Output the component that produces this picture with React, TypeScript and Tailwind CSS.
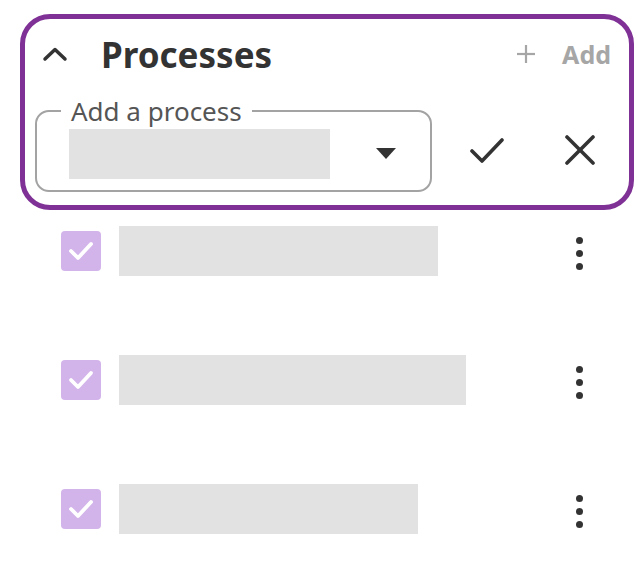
import { useState } from "react";

const font = { fontFamily: '"Noto Sans", "Liberation Sans", sans-serif' };

type Row = { id: number; width: number };

const rows: Row[] = [
  { id: 1, width: 319 },
  { id: 2, width: 347 },
  { id: 3, width: 299 },
];

function Kebab() {
  return (
    <div className="ml-auto mt-[4px] flex w-[8px] flex-col items-center gap-[6px]">
      <span className="h-[7px] w-[7px] rounded-full bg-[#333]" />
      <span className="h-[7px] w-[7px] rounded-full bg-[#333]" />
      <span className="h-[7px] w-[7px] rounded-full bg-[#333]" />
    </div>
  );
}

export default function App() {
  const [open] = useState(true);

  return (
    <main className="min-h-screen bg-white text-[#333]" style={font}>
      <div className="pl-[20px] pr-[4px] pt-[14px]">
        {/* Processes card */}
        <section className="rounded-[30px] border-[5px] border-[#7f3196] pb-[13px] pl-[10px] pr-[18px] pt-[17px]">
          <div className="flex h-[36px] items-center">
            <svg
              className="ml-[7px]"
              width="26"
              height="16"
              viewBox="0 0 26 16"
              fill="none"
              stroke="#333"
              strokeWidth="3.5"
              strokeLinecap="round"
              strokeLinejoin="round"
            >
              <polyline points="3,13 13,3.5 23,13" />
            </svg>
            <h1 className="ml-[33px] text-[35px] font-bold leading-none">Processes</h1>
            <button className="ml-auto flex items-center text-[#a6a6a6]">
              <svg width="20" height="20" viewBox="0 0 20 20" stroke="#a6a6a6" strokeWidth="2.2">
                <line x1="10" y1="1" x2="10" y2="19" />
                <line x1="1" y1="10" x2="19" y2="10" />
              </svg>
              <span className="ml-[26px] text-[25px] font-bold leading-none">Add</span>
            </button>
          </div>

          {open && (
            <div className="mt-[28px] flex items-center">
              <fieldset className="flex h-[92px] w-[397px] items-center rounded-[14px] border-2 border-[#a3a3a3] pb-[5px] pl-[24px] pr-[34px]">
                <legend className="px-[10px] text-[26px] leading-[22px] text-[#555]">Add a process</legend>
                <div className="ml-[8px] h-[50px] w-[261px] bg-[#e2e2e2]" />
                <svg className="ml-auto" width="20" height="11" viewBox="0 0 20 11">
                  <polygon points="0,0 20,0 10,11" fill="#333" />
                </svg>
              </fieldset>
              <svg
                className="ml-[38px] mt-[8px]"
                width="34"
                height="26"
                viewBox="0 0 34 26"
                fill="none"
                stroke="#333"
                strokeWidth="3.6"
                strokeLinecap="round"
                strokeLinejoin="round"
              >
                <polyline points="2,14 12,24 32,3" />
              </svg>
              <svg
                className="ml-[61px] mt-[8px]"
                width="30"
                height="30"
                viewBox="0 0 30 30"
                fill="none"
                stroke="#333"
                strokeWidth="3.6"
                strokeLinecap="round"
              >
                <line x1="2" y1="2" x2="28" y2="28" />
                <line x1="28" y1="2" x2="2" y2="28" />
              </svg>
            </div>
          )}
        </section>
      </div>

      {/* process list */}
      <ul className="mt-[16px] flex flex-col gap-[79px] pl-[61px] pr-[55px]">
        {rows.map((row) => (
          <li key={row.id} className="flex items-center">
            <div className="flex h-[40px] w-[40px] items-center justify-center rounded-[4px] bg-[#d2b4ea]">
              <svg
                width="26"
                height="20"
                viewBox="0 0 26 20"
                fill="none"
                stroke="#fff"
                strokeWidth="3.8"
                strokeLinecap="round"
                strokeLinejoin="round"
              >
                <polyline points="3,10 10,17 23,3" />
              </svg>
            </div>
            <div className="ml-[18px] h-[50px] bg-[#e2e2e2]" style={{ width: row.width }} />
            <Kebab />
          </li>
        ))}
      </ul>
    </main>
  );
}
